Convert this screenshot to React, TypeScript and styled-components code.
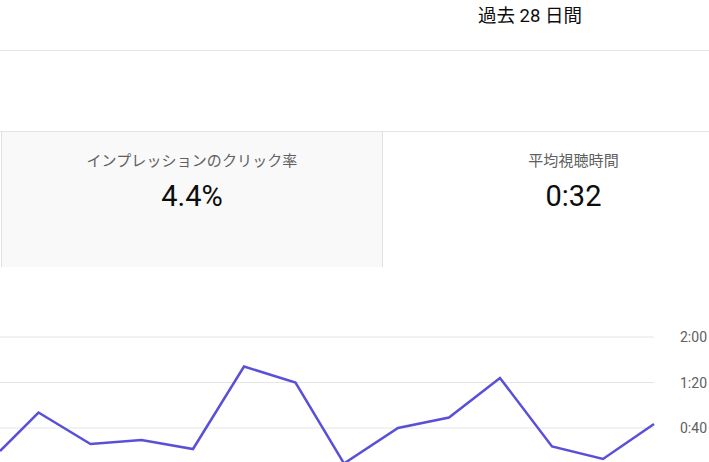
import styled, { createGlobalStyle } from "styled-components";

const GlobalStyle = createGlobalStyle`
  html, body {
    margin: 0;
    padding: 0;
    background: #ffffff;
    overflow: hidden;
  }
  body {
    font-family: Roboto, "Noto Sans CJK JP", "Noto Sans", sans-serif;
    color: #0d0d0d;
  }
`;

const cards = [
  { label: "インプレッションのクリック率", value: "4.4%", active: true },
  { label: "平均視聴時間", value: "0:32", active: false },
];

const points: [number, number][] = [
  [0, 451],
  [38.5, 412.5],
  [90.5, 444],
  [141.5, 440],
  [193, 449],
  [244, 366.5],
  [295.5, 382.5],
  [344, 463.5],
  [398, 428],
  [449, 417.5],
  [500, 378],
  [552, 446.5],
  [603, 459],
  [654, 424],
];

const ticks = [
  { label: "2:00", y: 337 },
  { label: "1:20", y: 382.5 },
  { label: "0:40", y: 428 },
];

const CHART_TOP = 290;

const App = () => {
  const linePath = points
    .map(([x, y], i) => `${i === 0 ? "M" : "L"}${x} ${y - CHART_TOP}`)
    .join(" ");

  return (
    <Page>
      <GlobalStyle />
      <Header>
        <Period>過去 28 日間</Period>
      </Header>
      <Spacer />
      <CardRow>
        {cards.map((card) => (
          <Card key={card.label} $active={card.active}>
            <CardLabel>{card.label}</CardLabel>
            <CardValue>{card.value}</CardValue>
          </Card>
        ))}
      </CardRow>
      <Chart>
        <svg width="709" height="172" viewBox="0 0 709 172">
          {ticks.map((t) => (
            <g key={t.label}>
              <line
                x1="0"
                x2="654"
                y1={t.y - CHART_TOP}
                y2={t.y - CHART_TOP}
                stroke="#e5e5e5"
                strokeWidth="1"
              />
              <AxisLabel x="680" y={t.y - CHART_TOP + 5}>
                {t.label}
              </AxisLabel>
            </g>
          ))}
          <path
            d={linePath}
            fill="none"
            stroke="#5a50d7"
            strokeWidth="2.5"
            strokeLinejoin="miter"
          />
        </svg>
      </Chart>
    </Page>
  );
};

const Page = styled.div`
  width: 709px;
  height: 462px;
  overflow: hidden;
`;

const Header = styled.header`
  height: 51px;
  border-bottom: 1px solid #e5e5e5;
  box-sizing: border-box;
  padding: 4px 0 0 478px;
`;

const Period = styled.span`
  font-size: 18.5px;
  line-height: 24px;
  color: #0d0d0d;
`;

const Spacer = styled.div`
  height: 80px;
`;

const CardRow = styled.div`
  display: flex;
  padding-left: 1px;
  border-top: 1px solid #e5e5e5;
  height: 135px;
`;

const Card = styled.div<{ $active: boolean }>`
  flex: 0 0 382px;
  box-sizing: border-box;
  display: flex;
  flex-direction: column;
  align-items: center;
  padding-top: 19px;
  background: ${({ $active }) => ($active ? "#f9f9f9" : "#ffffff")};
  border-left: ${({ $active }) => ($active ? "1px solid #e0e0e0" : "none")};
  border-right: 1px solid #e0e0e0;
`;

const CardLabel = styled.div`
  font-size: 15px;
  line-height: 20px;
  color: #606060;
  letter-spacing: 0.1px;
`;

const CardValue = styled.div`
  margin-top: 7px;
  font-size: 29px;
  line-height: 36px;
  color: #0d0d0d;
`;

const Chart = styled.div`
  margin-top: 23px;
  height: 172px;

  svg {
    display: block;
  }
`;

const AxisLabel = styled.text`
  font-family: Roboto, "Noto Sans", sans-serif;
  font-size: 14px;
  fill: #606060;
`;

export default App;
